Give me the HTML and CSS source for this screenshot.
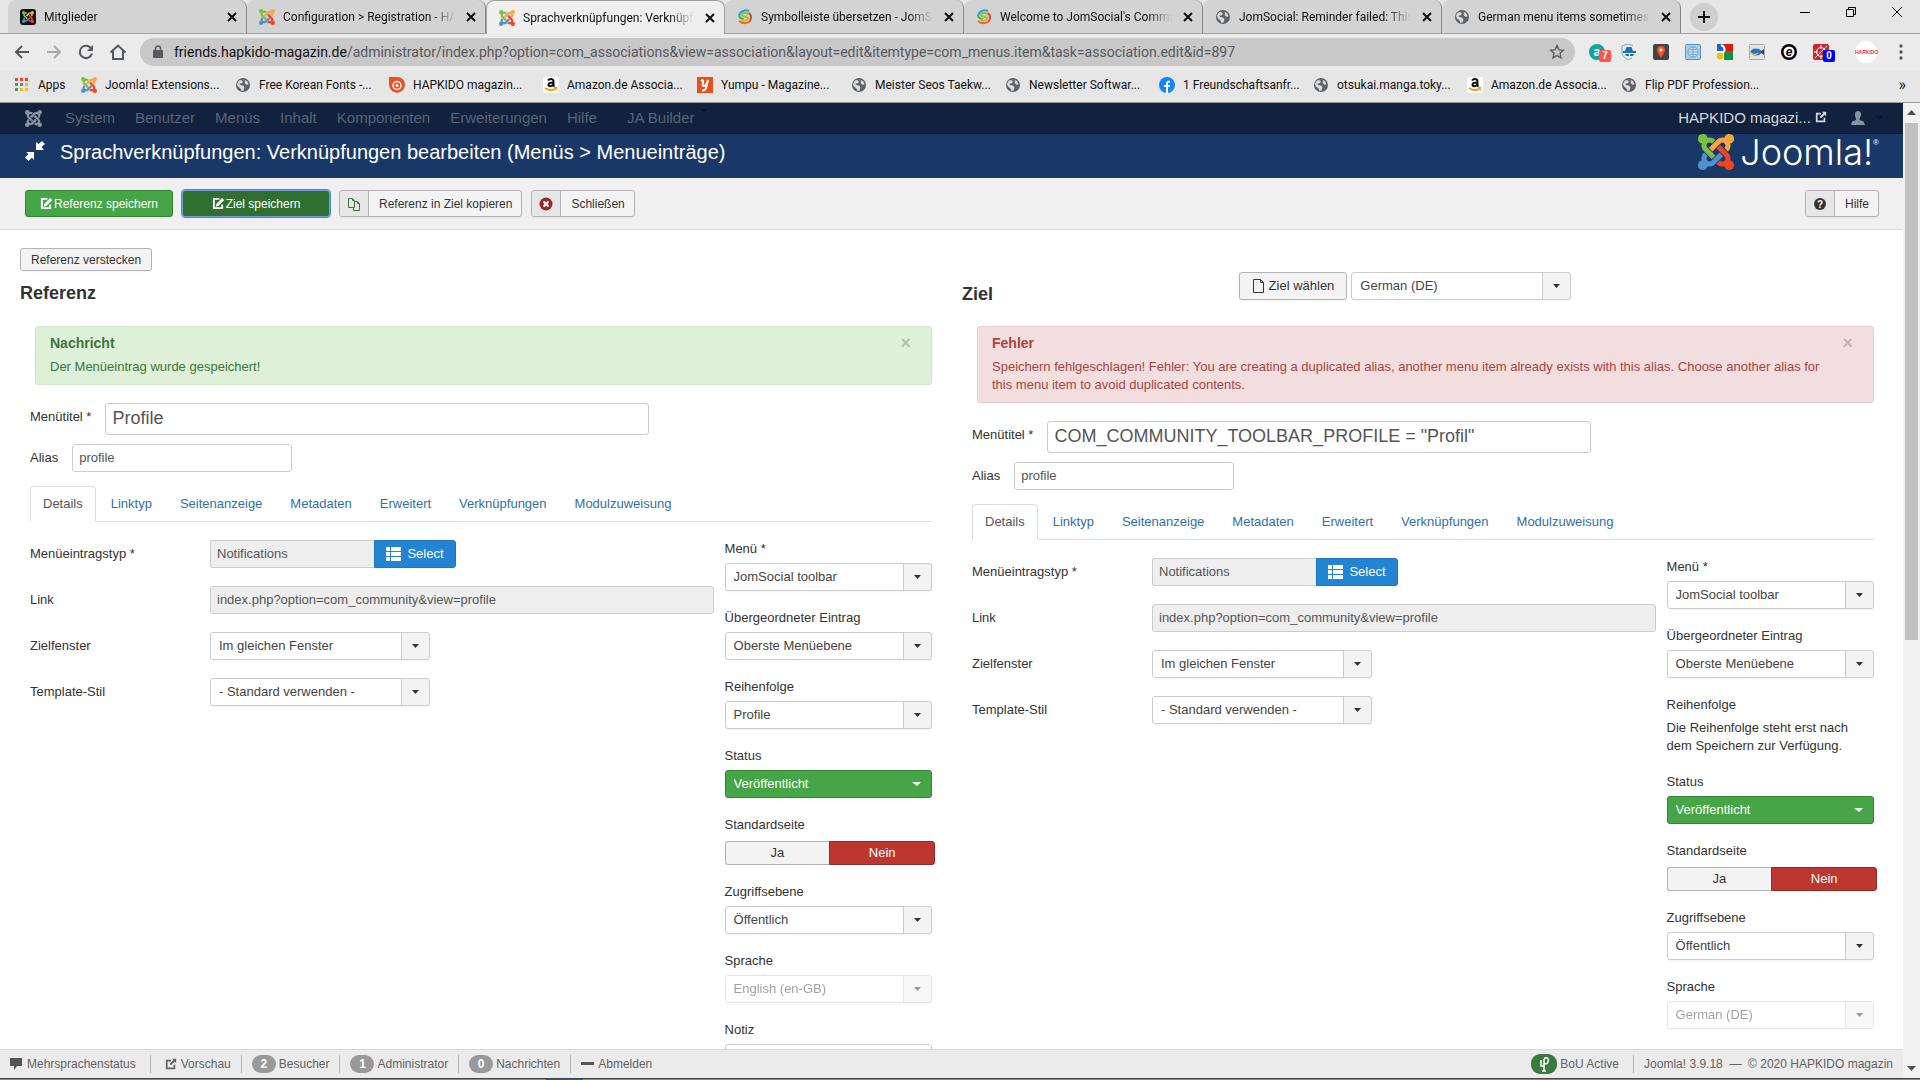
FILE: index.html
```html
<!DOCTYPE html>
<html lang="de">
<head>
<meta charset="utf-8">
<title>Sprachverknüpfungen: Verknüpfungen bearbeiten</title>
<link rel="stylesheet" href="styles.css">
</head>
<body>

<!-- shared icons -->
<svg class="defs" aria-hidden="true">
  <path id="arm" d="M16.72 14.76l-5.33 5.34c-1.37 1.36-3.3 1.83-5.05 1.4A3.21 3.21 0 1 1 2.47 17.65c-.45-1.76.02-3.7 1.4-5.08l.18-.18 2.37 2.37-.18.18c-.77.78-.77 2.02 0 2.79.77.78 2.02.78 2.79 0l5.34-5.34z"/>
  <symbol id="joomla" viewBox="0 0 24 24">
    <use href="#arm" fill="#4f91cd"/>
    <use href="#arm" fill="#7ac143" transform="rotate(90 12 12)"/>
    <use href="#arm" fill="#f9a541" transform="rotate(180 12 12)"/>
    <use href="#arm" fill="#f44321" transform="rotate(270 12 12)"/>
  </symbol>
  <symbol id="joomla-mono" viewBox="0 0 24 24">
    <use href="#arm"/><use href="#arm" transform="rotate(90 12 12)"/><use href="#arm" transform="rotate(180 12 12)"/><use href="#arm" transform="rotate(270 12 12)"/>
  </symbol>
  <symbol id="globe" viewBox="0 0 16 16">
    <circle cx="8" cy="8" r="7" fill="#5f6368"/>
    <path d="M3 4.500l2-1.500 2 .5 1 1.500-2 1.500H4.500L5 8l3 .5 1.500 2-1 3-2 .5-1-2.500L3 9.500 2 7zM9 2.500l3 1.500 1.500 3-1.500 1-2-1.500L9.500 5l1-1z" fill="#dcdcdc"/>
  </symbol>
  <symbol id="swirl" viewBox="0 0 16 16" fill="none">
    <path d="M12 2A7 7 0 0 0 2 7" stroke="#2aa3d8" stroke-width="2"/>
    <path d="M2 7q1 3 5 3" stroke="#39b54a" stroke-width="2"/>
    <path d="M12 5C8 3 5 4 5 6s6 1 6 4" stroke="#8cc63f" stroke-width="2"/>
    <path d="M12 4a6 6 0 0 1 0 9" stroke="#e8432e" stroke-width="2"/>
    <path d="M2 12q5 4 10 1" stroke="#f0642d" stroke-width="2"/>
    <path d="M11 10q-2 3-6 1" stroke="#f7a823" stroke-width="2"/>
  </symbol>
  <symbol id="amazon" viewBox="0 0 16 16">
    <rect width="16" height="16" rx="2" fill="#fff"/>
    <path d="M5 3.500q1-1.500 3-1.500 2.500 0 2.500 2.500V8q0 1 1 1.500M10.500 5.500C7 5.500 5.500 6 5.500 7.700c0 2.200 3.500 2 5-.7" fill="none" stroke="#111" stroke-width="2"/>
    <path d="M2 11q6 4 11 .5" fill="none" stroke="#f90" stroke-width="2"/><path d="M11 10.500h3l-.5 3" fill="none" stroke="#f90"/>
  </symbol>
  <symbol id="x" viewBox="0 0 16 16"><path d="M4 4l8 8M12 4l-8 8" stroke="currentColor" stroke-width="2"/></symbol>
  <symbol id="edit" viewBox="0 0 14 14">
    <path d="M8 2H2v10h9V8" fill="none" stroke="currentColor" stroke-width="2"/>
    <path d="M4.500 7.500L11 1l2.300 2.300-6.500 6.500-2.800.7z" fill="currentColor"/>
  </symbol>
  <symbol id="external" viewBox="0 0 14 14">
    <path d="M7 3H2v9h9V8" fill="none" stroke="currentColor" stroke-width="2"/>
    <path d="M8 1h5v5l-1.700-1.700-4.300 4.300-1.600-1.600 4.300-4.300z" fill="currentColor"/>
  </symbol>
  <symbol id="list" viewBox="0 0 15 14">
    <path d="M0 0h4v4H0zM5 0h10v4H5zM0 5h4v4H0zM5 5h10v4H5zM0 10h4v4H0zM5 10h10v4H5z" fill="currentColor"/>
  </symbol>
</svg>

<header class="browser">
  <div class="tabstrip">
    <a class="tab" href="#"><svg class="i16" viewBox="0 0 16 16"><rect width="16" height="16" rx="3" fill="#111"/><use href="#joomla" x="2" y="2" width="12" height="12"/></svg><span>Mitglieder</span><svg class="i16"><use href="#x"/></svg></a>
    <a class="tab" href="#"><svg class="i16"><use href="#joomla"/></svg><span>Configuration &gt; Registration - HAPKIDO</span><svg class="i16"><use href="#x"/></svg></a>
    <a class="tab current" href="#"><svg class="i16"><use href="#joomla"/></svg><span>Sprachverknüpfungen: Verknüpfungen</span><svg class="i16"><use href="#x"/></svg></a>
    <a class="tab" href="#"><svg class="i16"><use href="#swirl"/></svg><span>Symbolleiste übersetzen - JomSocial</span><svg class="i16"><use href="#x"/></svg></a>
    <a class="tab" href="#"><svg class="i16"><use href="#swirl"/></svg><span>Welcome to JomSocial's Community</span><svg class="i16"><use href="#x"/></svg></a>
    <a class="tab" href="#"><svg class="i16"><use href="#globe"/></svg><span>JomSocial: Reminder failed: This user</span><svg class="i16"><use href="#x"/></svg></a>
    <a class="tab" href="#"><svg class="i16"><use href="#globe"/></svg><span>German menu items sometimes do</span><svg class="i16"><use href="#x"/></svg></a>
    <button class="newtab" aria-label="Neuer Tab"><svg width="12" height="12"><path d="M6 0v12M0 6h12" stroke="#111" stroke-width="2"/></svg></button>
    <div class="winbuttons">
      <button aria-label="Minimieren"><svg width="12" height="12"><path d="M1 6.500h10" stroke="#000"/></svg></button>
      <button aria-label="Verkleinern"><svg width="12" height="12"><path d="M1.500 3.500h7v7h-7zM3.500 3.500v-2h7v7h-2" fill="none" stroke="#000"/></svg></button>
      <button aria-label="Fenster schließen"><svg width="12" height="12"><path d="M1 1l10 10M11 1L1 11" stroke="#000"/></svg></button>
    </div>
  </div>

  <div class="toolbar">
    <button class="tool" aria-label="Zurück"><svg width="16" height="16"><path d="M15 8H2M8 2L2 8l6 6" fill="none" stroke="#55585c" stroke-width="2"/></svg></button>
    <button class="tool" aria-label="Vor"><svg width="16" height="16"><path d="M1 8h13M8 2l6 6-6 6" fill="none" stroke="#a9a9a9" stroke-width="2"/></svg></button>
    <button class="tool" aria-label="Neu laden"><svg width="16" height="16"><path d="M13.500 5A6.200 6.200 0 1 0 14 9.500" fill="none" stroke="#55585c" stroke-width="2"/><path d="M15 1v6H9z" fill="#55585c"/></svg></button>
    <button class="tool" aria-label="Startseite"><svg width="18" height="16"><path d="M1.500 8.500L9 1.500l7.500 7M4 7v8h10V7" fill="none" stroke="#55585c" stroke-width="2"/></svg></button>
    <div class="omnibox">
      <svg width="12" height="14"><rect x="1" y="5" width="10" height="8" rx="1" fill="#55585c"/><path d="M3.500 5V3.500a2.500 2.500 0 0 1 5 0V5" fill="none" stroke="#55585c" stroke-width="1.500"/></svg>
      <p class="url"><b>friends.hapkido-magazin.de</b>/administrator/index.php?option=com_associations&amp;view=association&amp;layout=edit&amp;itemtype=com_menus.item&amp;task=association.edit&amp;id=897</p>
      <svg width="16" height="16"><path d="M8 1.500l1.900 4.300 4.600.4-3.500 3.100 1 4.600L8 11.500l-4 2.400 1-4.600L1.500 6.200l4.600-.4z" fill="none" stroke="#55585c" stroke-width="1.300"/></svg>
    </div>
    <div class="extensions">
      <span class="ext"><svg class="i16"><circle cx="8" cy="8" r="8" fill="#0aa89b"/><text x="8" y="12" text-anchor="middle" font-weight="bold" font-size="13" fill="#fff">a</text></svg><i class="count red">7</i></span>
      <span class="ext"><svg class="i16"><path d="M12 1.500L7 0 1 2v6c0 4 3 6 6 8l4-2" fill="none" stroke="#6aa9d0"/><path d="M4 7l1.500-4h5L12 7zM2 7h13v2H2zM4 10h4v2H5zM9 10h4l-1 2H9z" fill="#1b75a8"/></svg></span>
      <span class="ext"><svg class="i16"><rect width="16" height="16" rx="2" fill="#444"/><path d="M8 14C6 10 4 8.500 4 6a4 4 0 0 1 8 0c0 2.500-2 4-4 8z" fill="#f4512c"/><circle cx="8" cy="6" r="1.500" fill="#fff"/></svg></span>
      <span class="ext"><svg class="i16"><rect x=".5" y=".5" width="15" height="15" rx="1" fill="#a9cde8" stroke="#5795bf"/><circle cx="8" cy="8" r="5" fill="#d7ebf7" stroke="#6ba3cb"/><path d="M3 8h10M8 3v10M4.500 5.500h7M4.500 10.500h7" stroke="#6ba3cb"/></svg></span>
      <span class="ext"><svg class="i16"><path d="M0 0h7v7H0z" fill="#1a60d6"/><path d="M7 0h9v7H7z" fill="#e3170a"/><path d="M0 7h7v9H0z" fill="#fff"/><path d="M7 7h9v9H7z" fill="#109246"/><circle cx="3" cy="12" r="3.500" fill="#fabb05"/><path d="M4 1q5 2 3 7" fill="none" stroke="#fff" stroke-width="2"/></svg></span>
      <span class="ext"><svg class="i16"><rect x=".5" y=".5" width="15" height="15" rx="1" fill="#e4e4e4" stroke="#aaa"/><ellipse cx="7" cy="8" rx="5.500" ry="3.500" fill="#2e6fc4"/><path d="M11 8l4-3v6z" fill="#24437a"/><path d="M2 9q3 3 7 0" stroke="#e9c02c" stroke-width="1.500" fill="none"/></svg></span>
      <span class="ext"><svg class="i16"><circle cx="8" cy="8" r="8" fill="#000"/><circle cx="8" cy="8" r="5.500" fill="#fff"/><text x="8" y="12" text-anchor="middle" font-weight="bold" font-style="italic" font-size="12">e</text></svg></span>
      <span class="ext"><svg class="i16"><rect width="16" height="16" rx="2" fill="#d8232a"/><circle cx="8" cy="8" r="4.500" fill="none" stroke="#fff"/><path d="M2 14L14 2M8 1v4M8 11v4M1 8h4M5 11l5-5" stroke="#fff"/></svg><i class="count blue">0</i></span>
      <span class="avatar">HAPKIDO</span>
      <button class="dots" aria-label="Menü"><svg width="4" height="16" fill="#55585c"><circle cx="2" cy="2" r="1.700"/><circle cx="2" cy="8" r="1.700"/><circle cx="2" cy="14" r="1.700"/></svg></button>
    </div>
  </div>

  <nav class="bookmarks">
    <a class="apps" href="#"><svg class="i16"><path d="M1 1h3v3H1zM6 1h3v3H6z" fill="#ea4335"/><path d="M11 1h3v3h-3z" fill="#ea4335"/><path d="M1 6h3v3H1zM1 11h3v3H1z" fill="#34a853"/><path d="M6 6h3v3H6z" fill="#4285f4"/><path d="M11 6h3v3h-3zM6 11h3v3H6zM11 11h3v3h-3z" fill="#fbbc05"/></svg>Apps</a>
    <a href="#"><svg class="i16"><use href="#joomla"/></svg>Joomla! Extensions...</a>
    <a href="#"><svg class="i16"><use href="#globe"/></svg>Free Korean Fonts -...</a>
    <a href="#"><svg class="i16"><path d="M0 0h10a8 8 0 1 1-10 8z" fill="#f04e23"/><circle cx="8" cy="8.500" r="4" fill="none" stroke="#fff" stroke-width="1.500"/><circle cx="8" cy="8.500" r="1.500" fill="#fff"/></svg>HAPKIDO magazin...</a>
    <a href="#"><svg class="i16"><use href="#amazon"/></svg>Amazon.de Associa...</a>
    <a href="#"><svg class="i16"><rect width="16" height="16" fill="#e8501a"/><path d="M4 4q3-2 2 1.500-1 4 1 3.500 2-.5 4-6l-2 8q-1 3-4 2.500" fill="none" stroke="#fff" stroke-width="2"/></svg>Yumpu - Magazine...</a>
    <a href="#"><svg class="i16"><use href="#globe"/></svg>Meister Seos Taekw...</a>
    <a href="#"><svg class="i16"><use href="#globe"/></svg>Newsletter Softwar...</a>
    <a href="#"><svg class="i16"><circle cx="8" cy="8" r="8" fill="#1286f5"/><path d="M7 16v-6H5V8h2V6.500C7 4.500 8 3.500 11 3.800v1.800C9.500 5.500 9 5.800 9 7v1h2l-.4 2H9v6z" fill="#fff"/></svg>1 Freundschaftsanfr...</a>
    <a href="#"><svg class="i16"><use href="#globe"/></svg>otsukai.manga.toky...</a>
    <a href="#"><svg class="i16"><use href="#amazon"/></svg>Amazon.de Associa...</a>
    <a href="#"><svg class="i16"><use href="#globe"/></svg>Flip PDF Profession...</a>
    <button class="more" aria-label="Weitere Lesezeichen">»</button>
  </nav>
</header>

<div class="viewport">
<div class="admin">

  <nav class="navbar">
    <a class="brand" href="#" aria-label="Joomla"><svg width="17" height="17"><use href="#joomla-mono"/></svg></a>
    <ul>
      <li><a href="#">System</a></li>
      <li><a href="#">Benutzer</a></li>
      <li><a href="#">Menüs</a></li>
      <li><a href="#">Inhalt</a></li>
      <li><a href="#">Komponenten</a></li>
      <li><a href="#">Erweiterungen</a></li>
      <li><a href="#">Hilfe</a></li>
      <li class="ja"><a href="#">JA Builder</a><span class="caret"></span></li>
    </ul>
    <a class="site" href="#">HAPKIDO magazi... <svg width="12" height="12"><use href="#external"/></svg></a>
    <a class="user" href="#" aria-label="Benutzer"><svg width="14" height="14" fill="#8892a5"><path d="M7 0c2 0 3 1.500 3 3.500S9 7 8.500 7.500v1.500l4 1.500L14 14H0l1-3.500 4-1.500V7.500C4.500 7 4 5.500 4 3.500S5 0 7 0z"/></svg><span class="caret"></span></a>
  </nav>

  <header class="header">
    <svg width="20" height="20" fill="#fff"><path d="M11 1l2.500 2L17 0l3 3-3.500 3L19 9h-8zM1 11h8v8l-2-2.500L3.500 20 0 16.500 3.500 13z"/></svg>
    <h1>Sprachverknüpfungen: Verknüpfungen bearbeiten (Menüs &gt; Menueinträge)</h1>
    <div class="logo"><svg width="36" height="36"><use href="#joomla"/></svg><span>Joomla!</span><sup>®</sup></div>
  </header>

  <div class="subhead">
    <button class="btn save"><svg width="13" height="13"><use href="#edit"/></svg>Referenz speichern</button>
    <button class="btn save focus"><svg width="13" height="13"><use href="#edit"/></svg>Ziel speichern</button>
    <button class="btn split"><span class="ico"><svg width="14" height="14" fill="none" stroke="#3c763d"><path d="M1.500 1.500h4l2 2v7h-6zM5.500 1.500v2h2M7.500 4.500h3l2 2v7h-6v-3M10.500 4.500v2h2"/></svg></span><span class="txt">Referenz in Ziel kopieren</span></button>
    <button class="btn split"><span class="ico"><svg width="14" height="14"><circle cx="7" cy="7" r="6.500" fill="#942a25"/><path d="M4.500 4.500l5 5M9.500 4.500l-5 5" stroke="#fff" stroke-width="2"/></svg></span><span class="txt">Schließen</span></button>
    <button class="btn split help"><span class="ico"><svg width="14" height="14"><circle cx="7" cy="7" r="6" fill="#333"/><text x="7" y="11" text-anchor="middle" font-size="10" font-weight="bold" fill="#fff">?</text></svg></span><span class="txt">Hilfe</span></button>
  </div>

  <main class="sides">

    <section class="side">
      <div class="sidehead stacked">
        <button class="btn plain">Referenz verstecken</button>
        <h3>Referenz</h3>
      </div>
      <div class="alert success">
        <button class="close" aria-label="Meldung schließen">×</button>
        <h4>Nachricht</h4>
        <p>Der Menüeintrag wurde gespeichert!</p>
      </div>
      <form>
        <div class="inline"><label for="r-title">Menütitel *</label><input class="title" id="r-title" type="text" value="Profile"></div>
        <div class="inline"><label for="r-alias">Alias</label><input class="medium" id="r-alias" type="text" value="profile"></div>
        <ul class="tabs">
          <li class="active"><a href="#">Details</a></li>
          <li><a href="#">Linktyp</a></li>
          <li><a href="#">Seitenanzeige</a></li>
          <li><a href="#">Metadaten</a></li>
          <li><a href="#">Erweitert</a></li>
          <li><a href="#">Verknüpfungen</a></li>
          <li><a href="#">Modulzuweisung</a></li>
        </ul>
        <div class="columns">
          <div class="fields">
            <label for="r-type">Menüeintragstyp *</label>
            <div class="append"><input id="r-type" type="text" value="Notifications" readonly><button type="button" class="btn primary"><svg width="15" height="14"><use href="#list"/></svg>Select</button></div>
            <label for="r-link">Link</label>
            <input id="r-link" type="text" value="index.php?option=com_community&amp;view=profile" readonly>
            <label for="r-window">Zielfenster</label>
            <select class="medium" id="r-window"><option>Im gleichen Fenster</option></select>
            <label for="r-style">Template-Stil</label>
            <select class="medium" id="r-style"><option>- Standard verwenden -</option></select>
          </div>
          <div class="options">
            <div class="group"><label for="r-menu">Menü *</label><select id="r-menu"><option>JomSocial toolbar</option></select></div>
            <div class="group"><label for="r-parent">Übergeordneter Eintrag</label><select id="r-parent"><option>Oberste Menüebene</option></select></div>
            <div class="group"><label for="r-order">Reihenfolge</label><select id="r-order"><option>Profile</option></select></div>
            <div class="group"><label for="r-status">Status</label><select class="published" id="r-status"><option>Veröffentlicht</option></select></div>
            <fieldset class="group">
              <legend>Standardseite</legend>
              <div class="yesno"><input type="radio" name="r-home" id="r-yes"><label for="r-yes">Ja</label><input type="radio" name="r-home" id="r-no" checked><label for="r-no">Nein</label></div>
            </fieldset>
            <div class="group"><label for="r-access">Zugriffsebene</label><select id="r-access"><option>Öffentlich</option></select></div>
            <div class="group"><label for="r-lang">Sprache</label><select id="r-lang" disabled><option>English (en-GB)</option></select></div>
            <div class="group"><label for="r-note">Notiz</label><input id="r-note" type="text"></div>
          </div>
        </div>
      </form>
    </section>

    <section class="side">
      <div class="sidehead">
        <h3>Ziel</h3>
        <button class="btn choose"><svg width="13" height="16" fill="none" stroke="#333"><path d="M1.500 1.500h7l3 3v10h-10zM8.500 1.500v3h3"/></svg>Ziel wählen</button>
        <select class="medium" aria-label="Zielsprache"><option>German (DE)</option></select>
      </div>
      <div class="alert error">
        <button class="close" aria-label="Meldung schließen">×</button>
        <h4>Fehler</h4>
        <p>Speichern fehlgeschlagen! Fehler: You are creating a duplicated alias, another menu item already exists with this alias. Choose another alias for this menu item to avoid duplicated contents.</p>
      </div>
      <form>
        <div class="inline"><label for="t-title">Menütitel *</label><input class="title" id="t-title" type="text" value="COM_COMMUNITY_TOOLBAR_PROFILE = &quot;Profil&quot;"></div>
        <div class="inline"><label for="t-alias">Alias</label><input class="medium" id="t-alias" type="text" value="profile"></div>
        <ul class="tabs">
          <li class="active"><a href="#">Details</a></li>
          <li><a href="#">Linktyp</a></li>
          <li><a href="#">Seitenanzeige</a></li>
          <li><a href="#">Metadaten</a></li>
          <li><a href="#">Erweitert</a></li>
          <li><a href="#">Verknüpfungen</a></li>
          <li><a href="#">Modulzuweisung</a></li>
        </ul>
        <div class="columns">
          <div class="fields">
            <label for="t-type">Menüeintragstyp *</label>
            <div class="append"><input id="t-type" type="text" value="Notifications" readonly><button type="button" class="btn primary"><svg width="15" height="14"><use href="#list"/></svg>Select</button></div>
            <label for="t-link">Link</label>
            <input id="t-link" type="text" value="index.php?option=com_community&amp;view=profile" readonly>
            <label for="t-window">Zielfenster</label>
            <select class="medium" id="t-window"><option>Im gleichen Fenster</option></select>
            <label for="t-style">Template-Stil</label>
            <select class="medium" id="t-style"><option>- Standard verwenden -</option></select>
          </div>
          <div class="options">
            <div class="group"><label for="t-menu">Menü *</label><select id="t-menu"><option>JomSocial toolbar</option></select></div>
            <div class="group"><label for="t-parent">Übergeordneter Eintrag</label><select id="t-parent"><option>Oberste Menüebene</option></select></div>
            <div class="group"><span>Reihenfolge</span><p>Die Reihenfolge steht erst nach dem Speichern zur Verfügung.</p></div>
            <div class="group"><label for="t-status">Status</label><select class="published" id="t-status"><option>Veröffentlicht</option></select></div>
            <fieldset class="group">
              <legend>Standardseite</legend>
              <div class="yesno"><input type="radio" name="t-home" id="t-yes"><label for="t-yes">Ja</label><input type="radio" name="t-home" id="t-no" checked><label for="t-no">Nein</label></div>
            </fieldset>
            <div class="group"><label for="t-access">Zugriffsebene</label><select id="t-access"><option>Öffentlich</option></select></div>
            <div class="group"><label for="t-lang">Sprache</label><select id="t-lang" disabled><option>German (DE)</option></select></div>
          </div>
        </div>
      </form>
    </section>

  </main>

  <footer class="status">
    <a href="#"><svg width="14" height="12" fill="#555"><path d="M0 0h12v8H7l-3 4V8H0z"/></svg>Mehrsprachenstatus</a>
    <a href="#"><svg width="14" height="12"><use href="#external"/></svg>Vorschau</a>
    <a href="#"><span class="badge">2</span>Besucher</a>
    <a href="#"><span class="badge">1</span>Administrator</a>
    <a href="#"><span class="badge">0</span>Nachrichten</a>
    <a href="#"><svg width="14" height="12"><path d="M0 5.500h13" stroke="#555" stroke-width="3"/></svg>Abmelden</a>
    <span class="bou"><svg width="26" height="20"><rect width="26" height="20" rx="9" fill="#3b7a3f"/><path d="M13 17V5M11 17h4M13 4.500c4-2 5 1 4 3.500s-3 2-4 1M13 12H10V6" fill="none" stroke="#fff" stroke-width="1.500"/></svg>BoU Active</span>
    <span class="copyright">Joomla! 3.9.18&nbsp; —&nbsp; © 2020 HAPKIDO magazin</span>
  </footer>

</div>

<div class="scrollbar">
  <svg width="17" height="20"><path d="M4 12h9L8.500 7z" fill="#505050"/></svg>
  <div class="thumb"></div>
  <svg width="17" height="20"><path d="M4 8h9l-4.500 5z" fill="#505050"/></svg>
</div>
</div>

<div class="taskbar"><span></span></div>

</body>
</html>
```

FILE: styles.css
```css
* {box-sizing: border-box;}
html, body {margin: 0; padding: 0; height: 100%;}
body {
  display: flex; flex-direction: column; overflow: hidden;
  background: #fff; color: #333;
  font: 13px/18px "Liberation Sans", Arial, sans-serif;
}
h1, h3, h4, p {margin: 0;}
ul {margin: 0; padding: 0; list-style: none;}
a {color: inherit; text-decoration: none;}
button, input, select {font: inherit; color: inherit; margin: 0;}
button {border: 0; padding: 0; background: none; cursor: pointer;}
svg {flex: none;}
.defs {position: absolute; width: 0; height: 0;}
.i16 {width: 16px; height: 16px;}
.caret {border: 4px solid transparent; border-top-color: #0a1424; border-bottom: 0;}

/* browser */
.browser {
  flex: none; height: 103px; background: #e6e6e6; color: #111;
  border-bottom: 1px solid #999;
  font: 12px/16px Roboto, "Noto Sans", sans-serif;
}
.tabstrip {display: flex; height: 34px; padding-left: 8px; border-bottom: 1px solid #a0a0a0;}
.tab {
  display: flex; align-items: center; gap: 8px; flex: 0 1 239px; min-width: 0;
  padding: 0 6px 0 12px; background: #d3d3d3;
  border-right: 1px solid #888; border-radius: 8px 8px 0 0;
}
.tab span {
  flex: 1; overflow: hidden; white-space: nowrap;
  mask-image: linear-gradient(to left, transparent, #000 24px);
}
.tab.current {background: #efefef; border: 1px solid #a0a0a0; border-bottom: 0; margin-bottom: -1px;}
.newtab {
  display: flex; align-items: center; justify-content: center;
  width: 28px; height: 28px; margin: 3px 0 0 9px; border-radius: 50%; background: #cfcfcf;
}
.winbuttons {display: flex; margin-left: auto; height: 28px;}
.winbuttons button {width: 46px;}

.toolbar {display: flex; align-items: center; height: 36px; padding-left: 6px; background: #ebebeb;}
.tool {display: flex; align-items: center; justify-content: center; width: 32px; height: 28px;}
.omnibox {
  display: flex; align-items: center; gap: 10px; flex: 1; min-width: 0;
  height: 28px; margin-left: 6px; padding: 0 10px 0 12px;
  border-radius: 14px; background: #c8c8c8; color: #55585c;
}
.url {flex: 1; overflow: hidden; white-space: nowrap; font-size: 14px;}
.url b {font-weight: normal; color: #111;}
.extensions {display: flex; align-items: center; padding-left: 6px;}
.ext {position: relative; display: flex; justify-content: center; width: 32px;}
.ext text {font-family: "Liberation Sans", Arial, sans-serif;}
.count {
  position: absolute; right: 2px; top: 6px; width: 12px; border-radius: 2px;
  color: #fff; font: bold 10px/12px "Liberation Sans", Arial, sans-serif; text-align: center;
}
.red {background: #ff5252;}
.blue {background: #00f;}
.avatar {
  width: 22px; height: 22px; margin: 0 20px 0 18px; border-radius: 50%; background: #fff;
  color: #d33; font: bold 5px/22px "Liberation Sans", Arial, sans-serif; text-align: center;
}
.dots {display: flex; width: 23px; padding-left: 2px;}

.bookmarks {display: flex; align-items: center; height: 29px; padding: 0 14px;}
.bookmarks a {display: flex; align-items: center; gap: 8px; flex: 0 1 154px; min-width: 0; white-space: nowrap;}
.bookmarks .apps {flex-basis: 67px;}
.more {margin-left: auto; font-size: 16px;}

/* page area */
.viewport {display: flex; flex: 1; min-height: 0;}
.admin {flex: 1; min-width: 0; display: flex; flex-direction: column;}
.scrollbar {display: flex; flex-direction: column; width: 17px; background: #f1f1f1;}
.thumb {height: 53%; margin: 0 2px auto; background: #c1c1c1;}
.taskbar {flex: none; height: 2px; padding-left: 546px; background: #8a8a8a; border-top: 1px solid #444;}
.taskbar span {display: block; width: 37px; height: 1px; background: #0a64c8;}

.navbar {
  flex: none; display: flex; align-items: center; height: 31px; padding: 0 20px 0 25px;
  background: #10223e; border-bottom: 1px solid #0b1830;
  color: #586478; font-size: 15px;
}
.navbar ul {display: flex; margin-left: 13px;}
.navbar li {padding: 0 10px;}
.brand {display: flex; fill: #8892a5;}
.navbar .ja {display: flex; padding-left: 20px;}
.ja .caret {margin-left: 5px;}
.site {margin-left: auto; color: #d9d9d9;}
.user {display: flex; align-items: center; gap: 10px; margin-left: 24px;}

.header {
  flex: none; display: flex; gap: 15px; height: 44px; padding: 0 24px 0 25px;
  background: #1a3867; color: #fff;
}
.header > svg {margin-top: 7px;}
.header h1 {font-size: 20px; font-weight: normal; line-height: 36px;}
.logo {display: flex; margin-left: auto;}
.logo span {margin-left: 6px; font: 300 36px/36px Inter, sans-serif;}
.logo sup {font-size: 8px; line-height: 18px;}

.subhead {
  flex: none; display: flex; gap: 9px; height: 52px; padding: 12px 24px 0 25px;
  background: #f0f0f0; border-bottom: 1px solid #ddd;
}
.btn {
  display: flex; align-items: center; justify-content: center;
  border: 1px solid #b3b3b3; border-radius: 3px; background: #f3f3f3;
  font-size: 12px; white-space: nowrap; box-shadow: 0 1px 2px rgba(0,0,0,.05);
}
.subhead .btn {height: 27px;}
.save {width: 148px; gap: 1px; background: #46a546; border-color: #358535; color: #fff;}
.save.focus {background: #2f6f2f; border-color: #6fa0e0; outline: 1px solid #4b86d8;}
.split {align-items: stretch; overflow: hidden;}
.ico {display: flex; align-items: center; justify-content: center; width: 29px; background: #e6e6e6; border-right: 1px solid #b3b3b3;}
.ico text {font-family: "Liberation Sans", Arial, sans-serif;}
.txt {padding: 0 9px 0 10px; line-height: 26px;}
.help {margin-left: auto;}

/* reference and target */
.sides {
  flex: 1; min-height: 0; overflow: hidden;
  display: grid; grid-template-columns: 1fr 1fr; gap: 20px; padding: 18px 19px 0 20px;
}
.side {min-width: 0;}
.sidehead {display: flex; height: 57px; padding-top: 24px;}
.sidehead h3 {width: 30%; padding-top: 10px; font-size: 18px; line-height: 24px;}
.stacked {flex-direction: column; align-items: flex-start; padding-top: 0;}
.plain {height: 24px; padding: 0 10px;}
.choose {height: 28px; padding: 0 12px; margin-right: 4px; gap: 4px; font-size: 13px;}

.alert {margin: 21px 10px 0 15px; padding: 7px 34px 8px 14px; border: 1px solid; border-radius: 3px;}
.alert h4 {margin-bottom: 6px; font-size: 14px; line-height: 18px;}
.success {background: #dff0d8; border-color: #d0e9c6; color: #3c763d;}
.error {background: #f2dede; border-color: #ebccd1; color: #a94442;}
.close {float: right; margin-right: -14px; color: #000; opacity: .2; font-size: 18px; font-weight: bold;}

form {padding: 18px 10px 0;}
.inline {display: flex; margin-bottom: 9px;}
.inline label {padding-top: 5px; margin-right: 14px;}

input[type=text], select {
  width: 100%; height: 28px; border: 1px solid #ccc; border-radius: 3px;
  background: #fff; color: #555; padding: 0 6px 2px;
}
input.title {width: 544px; height: 32px; font-size: 18px;}
input.medium, select.medium {width: 220px;}
input[readonly] {background: #eee;}
select {
  appearance: none; padding: 0 34px 0 8px; color: #444; box-shadow: 0 1px 2px rgba(0,0,0,.05);
  background: #fff url("data:image/svg+xml,%3Csvg xmlns='http://www.w3.org/2000/svg' width='28' height='26'%3E%3Cpath d='M0 0h28v26H0z' fill='%23f3f3f3'/%3E%3Cpath d='M0 0h1v26H0z' fill='%23ccc'/%3E%3Cpath d='M11 11h7l-3.500 4z' fill='%23333'/%3E%3C/svg%3E") right top no-repeat;
}
select:disabled {opacity: .5;}
select.published {
  border-color: #358535; color: #fff;
  background: #46a546 url("data:image/svg+xml,%3Csvg xmlns='http://www.w3.org/2000/svg' width='28' height='26'%3E%3Cpath d='M9 11h9l-4 4z' fill='%23fff'/%3E%3C/svg%3E") right top no-repeat;
}

.tabs {display: flex; margin-top: 14px; border-bottom: 1px solid #ddd; color: #3071a9;}
.tabs li {margin: 0 2px -1px 0;}
.tabs a {display: block; height: 36px; padding: 8px 12px; border: 1px solid transparent; border-radius: 4px 4px 0 0;}
.tabs .active a {color: #555; background: #fff; border-color: #ddd #ddd #fff;}

.columns {display: grid; grid-template-columns: minmax(0, 1fr) 23%; gap: 11px; padding-top: 18px;}
.fields {display: grid; grid-template-columns: 180px minmax(0, 1fr); row-gap: 18px; align-content: start;}
.fields label {padding-top: 5px;}
.append {display: flex;}
.append input[type=text] {width: 164px; border-right: 0; border-radius: 3px 0 0 3px;}
.primary {width: 82px; gap: 6px; background: #2384d3; border-color: #1f76bd; border-radius: 0 3px 3px 0; color: #fff; font-size: 13px;}

.group {margin: 0 0 18px; padding: 0; border: 0; min-width: 0;}
.group > label, .group > span, legend {display: block; margin-bottom: 5px; padding: 0;}
.group select, .group input[type=text] {display: block;}
.yesno {display: flex; margin: 2px -3px 0 0;}
.yesno input {position: absolute; opacity: 0;}
.yesno label {
  flex: 1; height: 24px; text-align: center; line-height: 22px;
  border: 1px solid #b3b3b3; border-right: 0; border-radius: 3px 0 0 3px; background: #f3f3f3;
}
.yesno label:last-child {border: 1px solid #942a25; border-radius: 0 3px 3px 0;}
.yesno input:checked + label {background: #bd362f; color: #fff;}

/* status bar */
.status {
  flex: none; display: flex; align-items: center; height: 29px; padding: 0 10px;
  background: #ebebeb; border-top: 1px solid #d8d8d8; color: #626262; font-size: 12px;
}
.status a {display: flex; align-items: center; gap: 3px; padding-right: 10px; margin-right: 10px; border-right: 1px solid #b5b5b5;}
.status a:nth-of-type(1) {padding-right: 14px; margin-right: 13px;}
.status a:last-of-type {border: 0;}
.badge {width: 24px; border-radius: 9px; background: #999; color: #fff; font-weight: bold; text-align: center;}
.bou {display: flex; align-items: center; gap: 3px; margin-left: auto;}
.copyright {margin-left: 14px; padding-left: 10px; border-left: 1px solid #b5b5b5;}
```
